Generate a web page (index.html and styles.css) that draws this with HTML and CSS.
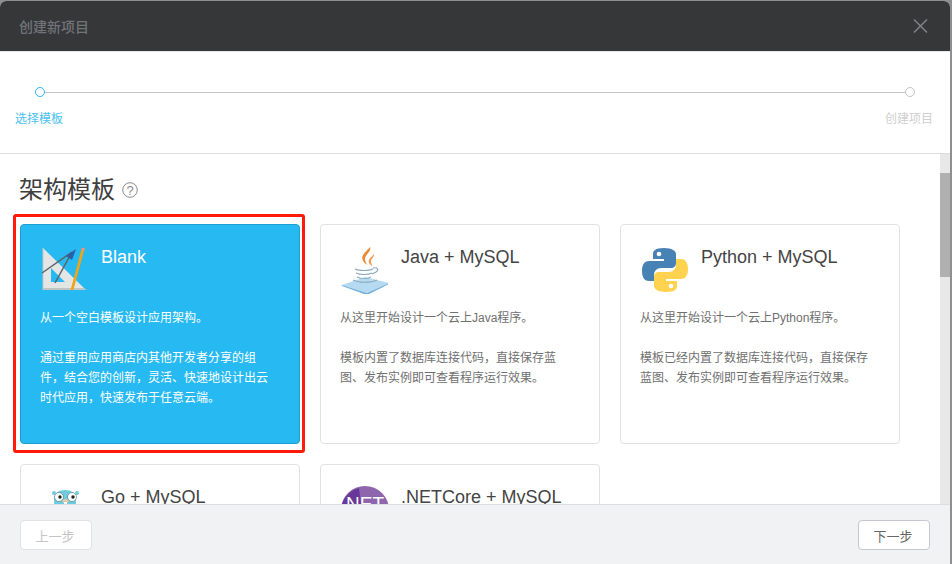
FILE: index.html
```html
<!DOCTYPE html>
<html lang="zh-CN">
<head>
<meta charset="utf-8">
<title>创建新项目</title>
<link rel="stylesheet" href="styles.css">
</head>
<body>
<div class="modal">
  <header class="modal-head">
    <span class="modal-title">创建新项目</span>
    <svg class="close" width="16" height="16" viewBox="0 0 16 16"><path d="M2 1.500l13 13M15 1.500L2 14.500" stroke="#7d8287" stroke-width="1.600" fill="none"/></svg>
  </header>
  <section class="steps">
    <div class="track">
      <span class="dot dot-on"></span>
      <span class="line"></span>
      <span class="dot"></span>
    </div>
    <div class="labels">
      <span class="label-on">选择模板</span>
      <span class="label-off">创建项目</span>
    </div>
  </section>
  <section class="content">
    <div class="scroll">
      <h2 class="heading">架构模板
        <svg class="help" width="16" height="16" viewBox="0 0 16 16"><circle cx="8" cy="8" r="7.300" fill="none" stroke="#8a8a8a" stroke-width="1"/><text x="8" y="12.500" text-anchor="middle" font-size="13" fill="#8a8a8a" font-family="Liberation Sans">?</text></svg>
      </h2>
      <div class="grid">
        <article class="card card-active">
          <div class="card-top">
            <svg class="logo" width="48" height="48" viewBox="-1 0 48 48">
              <path d="M2 2L45 44H2ZM10 22V36H24Z" fill="#e4e6e6" fill-rule="evenodd"/>
              <path d="M2 44H45L43 42H2Z" fill="#bfc4c4"/>
              <path d="M2 2V44" stroke="#c4c8c8" stroke-width="1"/>
              <path d="M31 6L1 27M31 6L14 37" stroke="#5e6468" stroke-width="1.500" fill="none"/>
              <path d="M25 10L35 3L31 14Z" fill="#2b5fa8"/>
              <path d="M42 3L31 44" stroke="#efa51a" stroke-width="2.800" fill="none"/>
              <path d="M41 1.500l3 .8-.8 2.800-3-.8z" fill="#e8967a"/>
            </svg>
            <h3 class="card-title">Blank</h3>
          </div>
          <p class="desc desc-first">从一个空白模板设计应用架构。</p>
          <p class="desc">通过重用应用商店内其他开发者分享的组件，结合您的创新，灵活、快速地设计出云时代应用，快速发布于任意云端。</p>
        </article>
        <article class="card">
          <div class="card-top">
            <svg class="logo" width="48" height="48" viewBox="-1 0 48 48">
              <path d="M1 39L24 31L48 37L26 47Z" fill="#b5daf2"/>
              <path d="M1 39L26 47L48 37V38L26 49L1 40Z" fill="#6fb0da"/>
              <path d="M29 1c2 5-6 8-5 13 .5 2 1.500 3 2 5-4-3-6-6-4-10 1.500-3 5-5 7-8z" fill="#ea8a35"/>
              <path d="M33 8c1 3-4 5-3 8 .3 1.500 1 2 1 4-3-2-4-4-3-6 1-3 4-4 5-6z" fill="#ee9a50"/>
              <path d="M14 23c4 2 14 2 18 0M15 27c4 2 12 2 16 0M16 31c4 2 10 2 14 0M12 34c6 3 18 3 24 0M32 22c5-1 6 2 3 4l-4 2" stroke="#8eaabd" stroke-width="1.200" fill="none"/>
            </svg>
            <h3 class="card-title">Java + MySQL</h3>
          </div>
          <p class="desc desc-first">从这里开始设计一个云上Java程序。</p>
          <p class="desc">模板内置了数据库连接代码，直接保存蓝图、发布实例即可查看程序运行效果。</p>
        </article>
        <article class="card">
          <div class="card-top">
            <svg class="logo" width="48" height="48" viewBox="-1 0 48 48">
              <path d="M23 2c-9 0-11 3-11 6v5h11v2H8c-4 0-7 3-7 10s3 10 7 10h5v-6c0-4 3-7 7-7h10c3 0 5-2 5-5V8c0-3-4-6-12-6z" fill="#4682b4"/>
              <path d="M25 46c9 0 11-3 11-6v-5H25v-2h15c4 0 7-3 7-10s-3-10-7-10h-5v6c0 4-3 7-7 7H18c-3 0-5 2-5 5v9c0 3 4 6 12 6z" fill="#ffd24f"/>
              <circle cx="18" cy="8" r="2.300" fill="#fff"/>
              <circle cx="30" cy="40" r="2.300" fill="#fff"/>
            </svg>
            <h3 class="card-title">Python + MySQL</h3>
          </div>
          <p class="desc desc-first">从这里开始设计一个云上Python程序。</p>
          <p class="desc">模板已经内置了数据库连接代码，直接保存蓝图、发布实例即可查看程序运行效果。</p>
        </article>
        <article class="card">
          <div class="card-top">
            <svg class="logo" width="48" height="48" viewBox="-1 0 48 48">
              <path d="M13 13c0-6 5-9 11-9s11 3 11 9v35H13Z" fill="#6fcbde"/>
              <circle cx="13" cy="7" r="2" fill="#6fcbde"/>
              <circle cx="36" cy="7" r="2" fill="#6fcbde"/>
              <circle cx="18" cy="11" r="4.500" fill="#fff" stroke="#3d6d7a" stroke-width=".6"/>
              <circle cx="31" cy="11" r="4.500" fill="#fff" stroke="#3d6d7a" stroke-width=".6"/>
              <circle cx="19" cy="11" r="1.700" fill="#222"/>
              <circle cx="32" cy="11" r="1.700" fill="#222"/>
              <ellipse cx="24.500" cy="15" rx="3" ry="2" fill="#e8c9a8"/>
              <rect x="23" y="16" width="3" height="4" fill="#fff"/>
            </svg>
            <h3 class="card-title">Go + MySQL</h3>
          </div>
        </article>
        <article class="card">
          <div class="card-top">
            <svg class="logo" width="48" height="48" viewBox="-1 0 48 48">
              <circle cx="24" cy="24" r="24" fill="#8f66ae"/>
              <path d="M0 24A24 24 0 0 0 24 48L18 2A24 24 0 0 0 0 24Z" fill="#5c2d91" opacity=".8"/>
              <text x="24" y="24" text-anchor="middle" font-size="19" fill="#fff" font-family="Liberation Sans">NET</text>
            </svg>
            <h3 class="card-title">.NETCore + MySQL</h3>
          </div>
        </article>
      </div>
    </div>
    <div class="scrollbar"><span class="thumb"></span></div>
    <div class="highlight"></div>
  </section>
  <footer class="foot">
    <button class="btn btn-disabled" type="button">上一步</button>
    <button class="btn" type="button">下一步</button>
  </footer>
</div>
</body>
</html>
```

FILE: styles.css
```css
* { box-sizing: border-box; }
html, body { margin: 0; height: 100%; overflow: hidden; }
body {
  background: #8d8f91;
  font-family: "Liberation Sans", "Noto Sans CJK SC", sans-serif;
}
.modal {
  width: 950px;
  height: 563px;
  margin-top: 1px;
  display: flex;
  flex-direction: column;
  background: #fff;
  border-radius: 6px 6px 0 0;
  overflow: hidden;
}
.modal-head {
  height: 50px;
  flex: none;
  background: #363739;
  display: flex;
  align-items: center;
  justify-content: space-between;
  padding: 0 22px 0 19px;
}
.modal-title { font-size: 14px; font-weight: 500; color: #6f7478; }
.close { display: block; }
.steps {
  height: 103px;
  flex: none;
  border-top: 1px solid #e6e7e8;
  border-bottom: 1px solid #dcdcdc;
  padding: 35px 35px 0 15px;
}
.track {
  display: flex;
  align-items: center;
  margin-left: 20px;
}
.dot {
  width: 10px;
  height: 10px;
  border-radius: 50%;
  border: 1px solid #c4c4c4;
  flex: none;
  background: #fff;
}
.dot-on { border-color: #29b6f2; }
.line { flex: 1; height: 1px; background: #c4c4c4; }
.labels {
  display: flex;
  justify-content: space-between;
  margin-top: 13px;
  margin-right: -18px;
  font-size: 12px;
  line-height: 18px;
}
.label-on { color: #4bbff0; }
.label-off { color: #cfcfcf; }
.content {
  flex: 1;
  min-height: 0;
  display: flex;
  position: relative;
  overflow: hidden;
}
.scroll {
  flex: 1;
  min-width: 0;
  padding: 20px 0 0 20px;
  overflow: hidden;
}
.heading {
  margin: 0 0 18px -1px;
  font-size: 24px;
  line-height: 32px;
  font-weight: 400;
  color: #3f3f3f;
  display: flex;
  align-items: center;
  gap: 7px;
}
.help { display: block; }
.grid {
  display: grid;
  grid-template-columns: repeat(3, 280px);
  grid-auto-rows: 220px;
  gap: 20px;
}
.card {
  border: 1px solid #dfe1e4;
  border-radius: 4px;
  background: #fff;
  padding: 20px 21px 0 19px;
  color: #707070;
}
.card-active {
  background: #27b9f2;
  border-color: #1d9fd3;
  color: #fff;
}
.card-top {
  display: flex;
  gap: 13px;
  height: 53px;
  margin-bottom: 10px;
}
.logo { flex: none; display: block; margin-top: 1px; }
.card-title {
  margin: 0;
  font-size: 18px;
  line-height: 24px;
  font-weight: 400;
  color: #444;
}
.card-active .card-title { color: #fff; }
.desc {
  margin: 0;
  font-size: 12px;
  line-height: 20px;
}
.desc-first { margin-bottom: 20px; }
.scrollbar {
  width: 10px;
  flex: none;
  background: #e8e8e8;
  padding-top: 19px;
}
.thumb { display: block; height: 104px; background: #b0b0b0; }
.highlight {
  position: absolute;
  left: 13px;
  top: 60px;
  width: 292px;
  height: 239px;
  border: 3px solid #ff1a0a;
  border-radius: 3px;
  pointer-events: none;
}
.foot {
  height: 60px;
  flex: none;
  background: #f1f2f4;
  border-top: 1px solid #dcdde0;
  display: flex;
  justify-content: space-between;
  align-items: flex-start;
  padding: 15px 20px 0;
}
.btn {
  width: 72px;
  height: 30px;
  border: 1px solid #c5c9cf;
  border-radius: 4px;
  background: #fff;
  font: 13px "Liberation Sans", "Noto Sans CJK SC", sans-serif;
  color: #666;
  padding: 0 2px 0 0;
}
.btn-disabled { border-color: #dfe1e4; color: #c4c4c4; }
```
